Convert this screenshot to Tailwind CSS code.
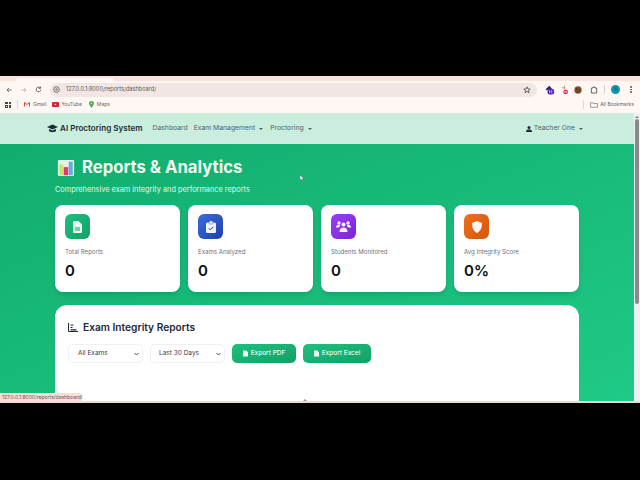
<!DOCTYPE html>
<html lang="en">
<head>
    <meta charset="UTF-8">
    <title>Reports &amp; Analytics</title>
    <script src="https://cdn.jsdelivr.net/npm/@tailwindcss/browser@4"></script>
</head>
<body class="bg-black font-['Inter',sans-serif] overflow-hidden">
    <div class="w-[640px] h-[480px] flex flex-col bg-black overflow-hidden">
        <div class="h-[76px] shrink-0"></div>

        <!-- Browser window -->
        <div class="h-[327px] shrink-0 flex flex-col relative overflow-hidden">
            <!-- Tab strip -->
            <div class="h-[5px] shrink-0 bg-[#fbe3dd] flex items-end">
                <div class="ml-[16px] w-[98px] h-[3px] rounded-t-[3px] bg-[#fff7f4]"></div>
            </div>

            <!-- Toolbar -->
            <div class="h-[17px] shrink-0 bg-[#fff7f4] flex items-center pl-[6px] pr-[6px]">
                <svg class="w-[6px] h-[6px] text-[#555]" viewBox="0 0 12 12" fill="none" stroke="currentColor" stroke-width="1.6"><path d="M11 6H2M6 2L2 6l4 4"/></svg>
                <svg class="w-[6px] h-[6px] ml-[9px] text-[#b5b0ae]" viewBox="0 0 12 12" fill="none" stroke="currentColor" stroke-width="1.6"><path d="M1 6h9M6 2l4 4-4 4"/></svg>
                <svg class="w-[7px] h-[7px] ml-[8px] text-[#555]" viewBox="0 0 12 12" fill="none" stroke="currentColor" stroke-width="1.6"><path d="M10 6.5A4 4 0 1 1 8.8 3M9.5 1v3h-3"/></svg>
                <div class="ml-[8px] w-[487px] h-[14px] rounded-full bg-[#f1e6e3] flex items-center pl-[3px] pr-[6px]">
                    <svg class="w-[7px] h-[7px] text-[#555]" viewBox="0 0 12 12" fill="none" stroke="currentColor" stroke-width="1.4"><circle cx="6" cy="6" r="4.8"/><circle cx="6" cy="6" r="1.4"/></svg>
                    <span class="ml-[6px] text-[5.6px] text-[#5f5a58] leading-none">127.0.0.1:8000/reports/dashboard/</span>
                    <svg class="ml-auto w-[8px] h-[8px] text-[#444]" viewBox="0 0 12 12" fill="none" stroke="currentColor" stroke-width="1.2"><path d="M6 1.3l1.4 3.1 3.3.3-2.5 2.2.8 3.3L6 8.2 3 10l.8-3.3L1.3 4.700l3.300-.3z"/></svg>
                </div>
                <svg class="w-[10px] h-[10px] ml-[8px]" viewBox="0 0 12 12"><path d="M1 5l4-4 3 3v2H1z" fill="#24246e"/><rect x="3" y="4.500" width="8" height="7" rx="2.500" fill="#5b2bc0"/><path d="M5.500 6.500v3M8 6.500v3" stroke="#fff" stroke-width=".8"/></svg>
                <svg class="w-[9px] h-[10px] ml-[5px]" viewBox="0 0 12 12"><path d="M6 0v5M2 3h5" stroke="#b08a4a" stroke-width="1" fill="none"/><circle cx="7.500" cy="8.500" r="3.200" fill="#e0345e"/><rect x="5.500" y="8" width="4" height="1" fill="#fff"/></svg>
                <svg class="w-[8px] h-[8px] ml-[5px]" viewBox="0 0 12 12"><circle cx="6" cy="6" r="5.500" fill="#7a5232"/><circle cx="4" cy="4.500" r="1" fill="#2f1c0d"/><circle cx="8" cy="6" r="1" fill="#2f1c0d"/><circle cx="5" cy="8.500" r="1" fill="#2f1c0d"/></svg>
                <svg class="w-[8px] h-[8px] ml-[8px] text-[#444]" viewBox="0 0 12 12" fill="none" stroke="currentColor" stroke-width="1.200"><path d="M2 3h2.500V1.500h3V3H10v7.500H2z"/></svg>
                <div class="w-px h-[9px] ml-[6px] bg-[#d8cfcc]"></div>
                <div class="w-[9px] h-[9px] ml-[6px] rounded-full bg-[#0f97a8] text-[5px] text-[#0b5f6b] flex items-center justify-center">8</div>
                <div class="ml-[10px] flex flex-col gap-[1px]">
                    <div class="w-[1.500px] h-[1.500px] rounded-full bg-[#555]"></div>
                    <div class="w-[1.500px] h-[1.500px] rounded-full bg-[#555]"></div>
                    <div class="w-[1.500px] h-[1.500px] rounded-full bg-[#555]"></div>
                </div>
            </div>

            <!-- Bookmarks bar -->
            <div class="h-[15px] shrink-0 bg-[#fff7f4] flex items-center pl-[5px] pr-[6px] pb-[2px] text-[5px] text-[#6a6462]">
                <div class="grid grid-cols-2 gap-[1px] w-[6px]">
                    <div class="h-[2.500px] border-[0.5px] border-[#444]"></div>
                    <div class="h-[2.500px] border-[0.5px] border-[#444]"></div>
                    <div class="h-[2.500px] border-[0.5px] border-[#444]"></div>
                    <div class="h-[2.500px] border-[0.5px] border-[#444]"></div>
                </div>
                <div class="w-px h-[9px] ml-[6px] bg-[#e2d9d6]"></div>
                <svg class="w-[6px] h-[5px] ml-[6px]" viewBox="0 0 12 10"><path d="M1 9V1l5 4 5-4v8" fill="none" stroke="#d9443a" stroke-width="2"/></svg>
                <span class="ml-[3px]">Gmail</span>
                <svg class="w-[7px] h-[5px] ml-[6px]" viewBox="0 0 14 10"><rect width="14" height="10" rx="2" fill="#d8203a"/><path d="M5.500 3v4l3.500-2z" fill="#fff"/></svg>
                <span class="ml-[2px]">YouTube</span>
                <svg class="w-[5px] h-[7px] ml-[7px]" viewBox="0 0 10 14"><path d="M5 14C3 10 0 8 0 5a5 5 0 0 1 10 0c0 3-3 5-5 9z" fill="#4aa85a"/><circle cx="5" cy="5" r="2" fill="#f4c430"/></svg>
                <span class="ml-[3px]">Maps</span>
                <div class="w-px h-[9px] ml-auto bg-[#e2d9d6]"></div>
                <svg class="w-[8px] h-[6px] ml-[6px] text-[#555]" viewBox="0 0 14 10" fill="none" stroke="currentColor" stroke-width="1"><path d="M1 1h4l1 1.500h7V9H1z"/></svg>
                <span class="ml-[2px]">All Bookmarks</span>
            </div>

            <!-- Page + scrollbar -->
            <div class="flex-1 flex min-h-0">
                <div class="w-[634px] flex flex-col min-h-0">
                    <!-- Navbar -->
                    <nav class="h-[31px] shrink-0 bg-[#c9eedd] flex items-center pl-[47px] pr-[51px] text-[6.8px] text-[#55625e]">
                        <svg class="w-[11px] h-[9px] text-[#1f2937]" viewBox="0 0 22 18" fill="currentColor"><path d="M11 1L0 6l11 5 11-5z"/><path d="M4 10v4c2 3 12 3 14 0v-4l-7 3z"/></svg>
                        <span class="ml-[2px] text-[8.1px] font-semibold text-[#1f2937]">AI Proctoring System</span>
                        <span class="ml-[10px]">Dashboard</span>
                        <span class="ml-[6px]">Exam Management</span>
                        <span class="ml-[4px] border-x-[2px] border-x-transparent border-t-[2px] border-t-[#55625e]"></span>
                        <span class="ml-[7px]">Proctoring</span>
                        <span class="ml-[4px] border-x-[2px] border-x-transparent border-t-[2px] border-t-[#55625e]"></span>
                        <svg class="ml-auto w-[6px] h-[6px] text-[#1f2937]" viewBox="0 0 12 12" fill="currentColor"><circle cx="6" cy="3.200" r="3"/><path d="M0 12c0-4 2-5 6-5s6 1 6 5z"/></svg>
                        <span class="ml-[2px]">Teacher One</span>
                        <span class="ml-[4px] border-x-[2px] border-x-transparent border-t-[2px] border-t-[#55625e]"></span>
                    </nav>

                    <!-- Main -->
                    <main class="flex-1 min-h-0 overflow-hidden bg-linear-to-br from-[#12ad6e] to-[#1fc986] pl-[55px] pr-[55px]">
                        <div class="flex items-center h-[19px] mt-[14px] pl-[2px]">
                            <svg class="w-[18px] h-[18px]" viewBox="0 0 20 20">
                                <rect x="1" y="1" width="18" height="18" rx="1.500" fill="#e8efe9"/>
                                <rect x="2.500" y="6" width="4.500" height="12" fill="#c6e86a"/>
                                <rect x="7.500" y="9" width="5" height="9" fill="#e0347c"/>
                                <rect x="13" y="3" width="4.500" height="15" fill="#5cb2d6"/>
                            </svg>
                            <h1 class="ml-[7px] text-[16.7px] font-bold text-[#eefcf5] leading-none">Reports &amp; Analytics</h1>
                        </div>
                        <p class="mt-[8px] text-[7.35px] leading-[10px] text-[#e3f8ee]">Comprehensive exam integrity and performance reports</p>

                        <!-- Stat cards -->
                        <div class="mt-[10px] grid grid-cols-4 gap-[8px]">
                            <div class="h-[87px] rounded-[8px] bg-white shadow-md shadow-black/10 pt-[9px] px-[10px]">
                                <div class="w-[25px] h-[25px] rounded-[6px] bg-linear-to-br from-[#1fc080] to-[#12a066] flex items-center justify-center">
                                    <svg class="w-[9px] h-[12px]" viewBox="0 0 9 12"><path d="M0 1a1 1 0 0 1 1-1h4.500L9 3.500V11a1 1 0 0 1-1 1H1a1 1 0 0 1-1-1z" fill="#e6f9f0"/><rect x="2" y="6" width="5" height="4" fill="#6fd3a8"/></svg>
                                </div>
                                <p class="mt-[9px] text-[6.1px] leading-[8px] text-[#6b7280]">Total Reports</p>
                                <p class="mt-[6px] text-[15px] leading-[18px] font-semibold text-[#0b0f19]">0</p>
                            </div>
                            <div class="h-[87px] rounded-[8px] bg-white shadow-md shadow-black/10 pt-[9px] px-[10px]">
                                <div class="w-[25px] h-[25px] rounded-[6px] bg-linear-to-br from-[#3b6ee0] to-[#1e3fa8] flex items-center justify-center">
                                    <svg class="w-[10px] h-[12px]" viewBox="0 0 10 12"><rect y="1.500" width="10" height="10.500" rx="1.500" fill="#eef3ff"/><rect x="3" y="0" width="4" height="3" rx="1" fill="#eef3ff" stroke="#2a4fc0" stroke-width=".5"/><path d="M2.800 7.300l1.600 1.600 2.900-3" fill="none" stroke="#1e3fa8" stroke-width="1"/></svg>
                                </div>
                                <p class="mt-[9px] text-[6.1px] leading-[8px] text-[#6b7280]">Exams Analyzed</p>
                                <p class="mt-[6px] text-[15px] leading-[18px] font-semibold text-[#0b0f19]">0</p>
                            </div>
                            <div class="h-[87px] rounded-[8px] bg-white shadow-md shadow-black/10 pt-[9px] px-[10px]">
                                <div class="w-[25px] h-[25px] rounded-[6px] bg-linear-to-br from-[#9a3ff0] to-[#7a22d8] flex items-center justify-center">
                                    <svg class="w-[15px] h-[11px]" viewBox="0 0 15 11" fill="#f6efff"><circle cx="3" cy="2" r="1.700"/><circle cx="12" cy="2" r="1.700"/><circle cx="7.500" cy="3.500" r="2"/><path d="M0 6.500c0-2 1-2.500 2.500-2.500s1.800.5 1.800 1C3.500 5.500 3 6 3 6.500zM15 6.500c0-2-1-2.500-2.500-2.500s-1.800.5-1.800 1c.8.5 1.300 1 1.300 1.500zM3.500 11c0-3 1.500-4.500 4-4.500s4 1.500 4 4.500z"/></svg>
                                </div>
                                <p class="mt-[9px] text-[6.1px] leading-[8px] text-[#6b7280]">Students Monitored</p>
                                <p class="mt-[6px] text-[15px] leading-[18px] font-semibold text-[#0b0f19]">0</p>
                            </div>
                            <div class="h-[87px] rounded-[8px] bg-white shadow-md shadow-black/10 pt-[9px] px-[10px]">
                                <div class="w-[25px] h-[25px] rounded-[6px] bg-linear-to-br from-[#f0701c] to-[#d4560e] flex items-center justify-center">
                                    <svg class="w-[10px] h-[12px]" viewBox="0 0 10 12"><path d="M5 0l5 2c0 5-1.500 8-5 10C1.500 10 0 7 0 2z" fill="#fff5ee"/></svg>
                                </div>
                                <p class="mt-[9px] text-[6.1px] leading-[8px] text-[#6b7280]">Avg Integrity Score</p>
                                <p class="mt-[6px] text-[15px] leading-[18px] font-semibold text-[#0b0f19]">0%</p>
                            </div>
                        </div>

                        <!-- Reports panel -->
                        <section class="mt-[13px] h-[130px] rounded-[12px] bg-white pt-[15px] px-[13px]">
                            <div class="flex items-center h-[14px]">
                                <svg class="w-[10px] h-[9px] text-[#1f2937]" viewBox="0 0 10 9" fill="none" stroke="currentColor"><path d="M.5 0v8.500H10" stroke-width="1"/><path d="M2.500 2h3M2.500 4.500h2M2.500 6.800h6" stroke-width="1.200"/></svg>
                                <h2 class="ml-[5px] text-[10.2px] font-semibold text-[#1f2937] leading-none">Exam Integrity Reports</h2>
                            </div>
                            <div class="flex mt-[10px] gap-[7px]">
                                <div class="w-[75px] h-[19px] rounded-[5px] border border-[#eef0f2] bg-white flex items-center justify-between pl-[9px] pr-[3px] text-[6.500px] text-[#374151]">
                                    <span>All Exams</span>
                                    <svg class="w-[5px] h-[4px]" viewBox="0 0 10 8" fill="none" stroke="#374151" stroke-width="1.800"><path d="M1 2l4 4 4-4"/></svg>
                                </div>
                                <div class="w-[75px] h-[19px] rounded-[5px] border border-[#eef0f2] bg-white flex items-center justify-between pl-[8px] pr-[3px] text-[6.500px] text-[#374151]">
                                    <span>Last 30 Days</span>
                                    <svg class="w-[5px] h-[4px]" viewBox="0 0 10 8" fill="none" stroke="#374151" stroke-width="1.800"><path d="M1 2l4 4 4-4"/></svg>
                                </div>
                                <div class="w-[64px] h-[19px] rounded-[5px] bg-linear-to-br from-[#1fc080] to-[#12a066] flex items-center justify-center gap-[3px] text-[6.500px] font-medium text-[#e9fbf3]">
                                    <svg class="w-[5px] h-[7px]" viewBox="0 0 5 6"><path d="M0 0h3.200L5 1.800V6H0z" fill="#e9fbf3"/></svg>
                                    <span>Export PDF</span>
                                </div>
                                <div class="w-[68px] h-[19px] rounded-[5px] bg-linear-to-br from-[#1fc080] to-[#12a066] flex items-center justify-center gap-[3px] text-[6.500px] font-medium text-[#e9fbf3]">
                                    <svg class="w-[5px] h-[7px]" viewBox="0 0 5 6"><path d="M0 0h3.200L5 1.800V6H0z" fill="#e9fbf3"/></svg>
                                    <span>Export Excel</span>
                                </div>
                            </div>
                        </section>
                    </main>
                </div>

                <!-- Scrollbar -->
                <div class="w-[6px] shrink-0 bg-[#f1f1f1] flex flex-col items-center pt-[3px]">
                    <div class="border-x-[2px] border-x-transparent border-b-[2px] border-b-[#777]"></div>
                    <div class="w-[4px] h-[185px] mt-[1px] rounded-full bg-[#8a8a8a]"></div>
                </div>
            </div>

            <!-- Bottom edge of the window -->
            <div class="h-[2px] shrink-0 bg-[#ecd9d6]"></div>

            <!-- Link status bubble -->
            <div class="absolute left-0 bottom-[1px] h-[9px] w-[82px] rounded-tr-[2px] bg-[#fbdcd6] pl-[2px] text-[5px] leading-[9px] text-[#6a5450]">127.0.0.1:8000/reports/dashboard/</div>
            <!-- Scroll hint -->
            <div class="absolute left-[303px] bottom-[2px] border-x-[2px] border-x-transparent border-b-[2px] border-b-[#9a9a9a]"></div>
            <!-- Cursor -->
            <svg class="absolute left-[300px] top-[99px] w-[4px] h-[6px]" viewBox="0 0 4 6"><path d="M0 0v5l1.200-1 1 2 .8-.4-.9-1.800H4z" fill="#f3f4f6" stroke="#374151" stroke-width=".3"/></svg>
        </div>

        <div class="flex-1"></div>
    </div>
</body>
</html>
